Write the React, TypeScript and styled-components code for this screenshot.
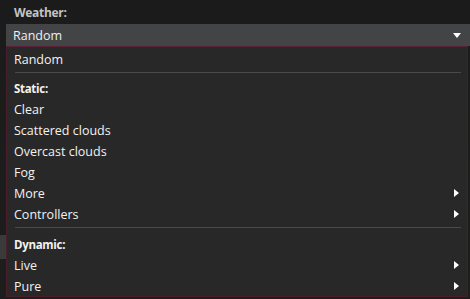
import React from "react";
import styled, { createGlobalStyle } from "styled-components";

const Global = createGlobalStyle`
  html, body { margin: 0; padding: 0; background: #1b1c1b; }
  body { width: 470px; height: 299px; overflow: hidden; font-family: "Open Sans", "Noto Sans", sans-serif; }
`;

const Page = styled.div`
  width: 470px;
  height: 299px;
  background: linear-gradient(180deg, #1a1b1a 0%, #1d1e1c 100%);
  display: flex;
  flex-direction: column;
  overflow: hidden;
`;

const Label = styled.div`
  height: 24px;
  flex-shrink: 0;
  padding-left: 14px;
  display: flex;
  align-items: center;
  color: #c4c4c4;
  font-weight: 700;
  font-size: 12px;
  letter-spacing: -0.3px;
  box-sizing: border-box;
`;

const Body = styled.div`
  display: flex;
  flex: 1;
  min-height: 0;
`;

const Gutter = styled.div`
  width: 6px;
  flex-shrink: 0;
  display: flex;
  flex-direction: column;
  padding-top: 211px;
`;

const GutterBlock = styled.div`
  height: 24px;
  background: #3a3a3a;
`;

const Column = styled.div`
  flex: 1;
  display: flex;
  flex-direction: column;
`;

const Select = styled.div`
  height: 22px;
  flex-shrink: 0;
  background: #434446;
  display: flex;
  align-items: center;
  justify-content: space-between;
  padding: 1px 9px 0 7px;
  box-sizing: border-box;
  color: #f0f0f0;
  font-size: 12.5px;
`;

const Menu = styled.div`
  width: 462px;
  box-sizing: border-box;
  border: 1px solid #4a1d2d;
  border-top-color: #5a2236;
  background: #282828;
  padding: 1px 0 0 0;
  display: flex;
  flex-direction: column;
  flex-shrink: 0;
`;

const Item = styled.div<{ $header?: boolean }>`
  height: 21px;
  flex-shrink: 0;
  display: flex;
  align-items: center;
  justify-content: space-between;
  padding: 1px 8px 0 7px;
  box-sizing: border-box;
  color: #f2f2f2;
  font-size: 12.5px;
  font-weight: ${(p) => (p.$header ? 700 : 400)};
  ${(p) => (p.$header ? "font-size: 11.5px; letter-spacing: -0.3px;" : "")}
`;

const Sep = styled.div<{ $after?: number }>`
  height: 1px;
  flex-shrink: 0;
  background: #4a4a4a;
  margin: 3px 6px ${(p) => p.$after ?? 4}px 8px;
`;

const Arrow = () => (
  <svg width="8" height="6" viewBox="0 0 8 6">
    <path d="M0 0 H8 L4 5 Z" fill="#fff" />
  </svg>
);

const SubArrow = () => (
  <svg width="5" height="8" viewBox="0 0 5 8">
    <path d="M0 0 L5 4 L0 8 Z" fill="#fff" />
  </svg>
);

export default function App() {
  return (
    <Page>
      <Global />
      <Label>Weather:</Label>
      <Body>
        <Gutter>
          <GutterBlock />
        </Gutter>
        <Column>
          <Select>
            <span>Random</span>
            <Arrow />
          </Select>
          <Menu>
            <Item>Random</Item>
            <Sep />
            <Item $header>Static:</Item>
            <Item>Clear</Item>
            <Item>Scattered clouds</Item>
            <Item>Overcast clouds</Item>
            <Item>Fog</Item>
            <Item>
              <span>More</span>
              <SubArrow />
            </Item>
            <Item>
              <span>Controllers</span>
              <SubArrow />
            </Item>
            <Sep $after={5} />
            <Item $header>Dynamic:</Item>
            <Item>
              <span>Live</span>
              <SubArrow />
            </Item>
            <Item>
              <span>Pure</span>
              <SubArrow />
            </Item>
          </Menu>
        </Column>
      </Body>
    </Page>
  );
}
